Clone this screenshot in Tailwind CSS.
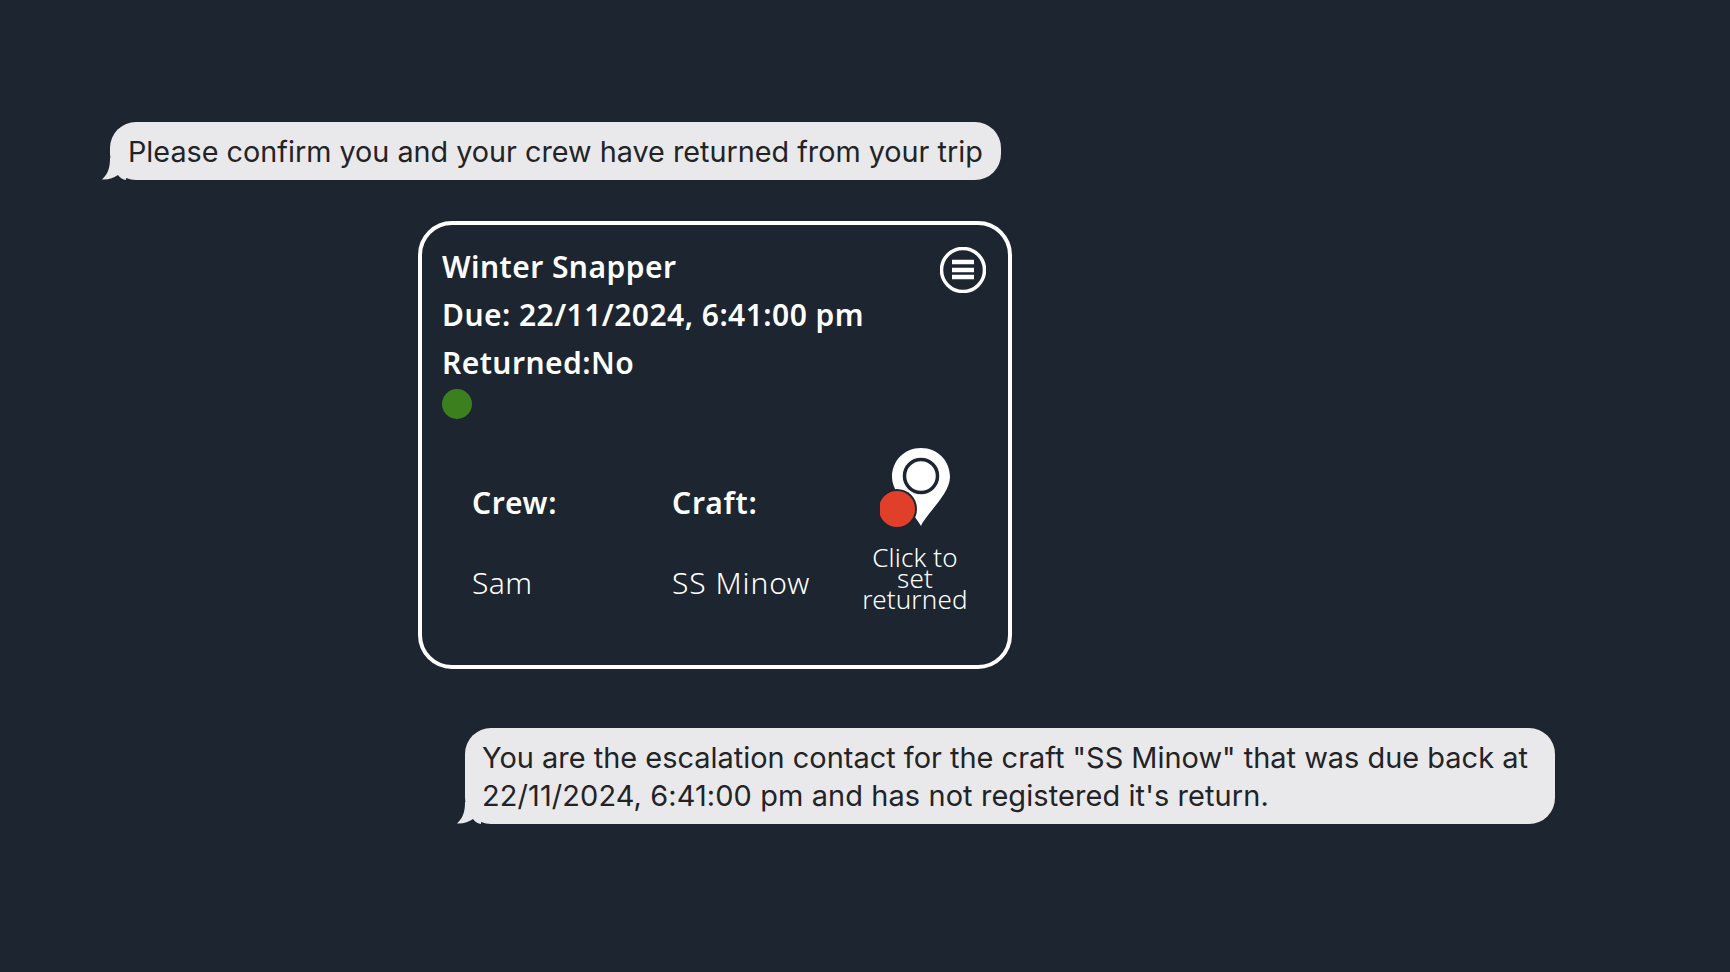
<!doctype html>
<html>
<head>
<meta charset="utf-8">
<script src="https://cdn.jsdelivr.net/npm/@tailwindcss/browser@4"></script>
</head>
<body class="m-0 h-[972px] w-[1730px] overflow-hidden bg-[#1c2530]">
<div class="flex flex-col items-start pt-[122px]">
  <div class="relative ml-[110px] rounded-[26px] bg-[#e9e9eb] px-[18px] pb-[9px] pt-[11px] font-['Inter','Liberation_Sans',sans-serif] text-[28.78px] leading-[38px] text-[#232326] whitespace-nowrap">
    Please confirm you and your crew have returned from your trip
    <svg class="absolute bottom-0 left-[-8px]" width="24" height="22" viewBox="0 0 24 22"><path d="M8 0 C8 8 7 15 0 21.5 C6 22 12 20 16 17 C18 20 21 21.5 24 22 L24 0 Z" fill="#e9e9eb"/></svg>
  </div>

  <div class="relative mt-[41px] ml-[418px] flex h-[448px] w-[594px] flex-col rounded-[34px] border-4 border-white pl-[20px] pt-[18px] font-['Noto_Sans','Open_Sans',sans-serif] text-white">
    <div class="text-[30px] font-semibold leading-[48px] tracking-[0.45px]">
      <div>Winter Snapper</div>
      <div>Due: 22/11/2024, 6:41:00 pm</div>
      <div>Returned:No</div>
    </div>
    <div class="mt-[2px] size-[30px] rounded-full bg-[#3b7f1f]"></div>
    <svg class="absolute right-[22px] top-[22px]" width="46" height="46" viewBox="0 0 46 46" fill="none">
      <circle cx="23" cy="23" r="21.5" stroke="white" stroke-width="3.5"/>
      <path d="M12 15h22M12 23h22M12 30h22" stroke="white" stroke-width="4.5"/>
    </svg>
    <div class="mt-[15px] grid grid-cols-[200px_165px_auto] pl-[30px]">
      <div class="flex flex-col">
        <div class="mt-[45px] text-[30px] font-semibold leading-[48px] tracking-[0.7px]">Crew:</div>
        <div class="mt-[32px] text-[30px] font-light leading-[48px] tracking-[0.4px]">Sam</div>
      </div>
      <div class="flex flex-col">
        <div class="mt-[45px] text-[30px] font-semibold leading-[48px] tracking-[0.8px]">Craft:</div>
        <div class="mt-[32px] text-[30px] font-light leading-[48px] tracking-[0.95px]">SS Minow</div>
      </div>
      <div class="ml-[22px] flex w-[112px] flex-col items-center">
        <svg class="mt-[12px] ml-[9px]" width="80" height="82" viewBox="0 0 80 82">
          <path d="M41 2 C24 2 12 15 12 31 C12 48 33 66 41 80 C46 68 70 48 70 31 C70 15 58 2 41 2 Z" fill="white"/>
          <circle cx="41" cy="30" r="16.5" fill="white" stroke="#1c2530" stroke-width="3.5"/>
          <circle cx="17" cy="63" r="20" fill="#1c2530"/>
          <circle cx="17" cy="63" r="18" fill="#e0402a"/>
        </svg>
        <div class="mt-[19px] text-center text-[26px] font-light leading-[21px] tracking-[0.15px]">Click to<br>set<br>returned</div>
      </div>
    </div>
  </div>

  <div class="relative mt-[59px] ml-[465px] w-[1090px] rounded-[26px] bg-[#e9e9eb] pb-[9px] pl-[17px] pr-[18px] pt-[11px] font-['Inter','Liberation_Sans',sans-serif] text-[28.95px] leading-[38px] text-[#232326] whitespace-nowrap">
    You are the escalation contact for the craft "SS Minow" that was due back at<br><span class="tracking-[0.1px]">22/11/2024, 6:41:00 pm and has not registered it's return.</span>
    <svg class="absolute bottom-0 left-[-8px]" width="24" height="22" viewBox="0 0 24 22"><path d="M8 0 C8 8 7 15 0 21.5 C6 22 12 20 16 17 C18 20 21 21.5 24 22 L24 0 Z" fill="#e9e9eb"/></svg>
  </div>
</div>
</body>
</html>
